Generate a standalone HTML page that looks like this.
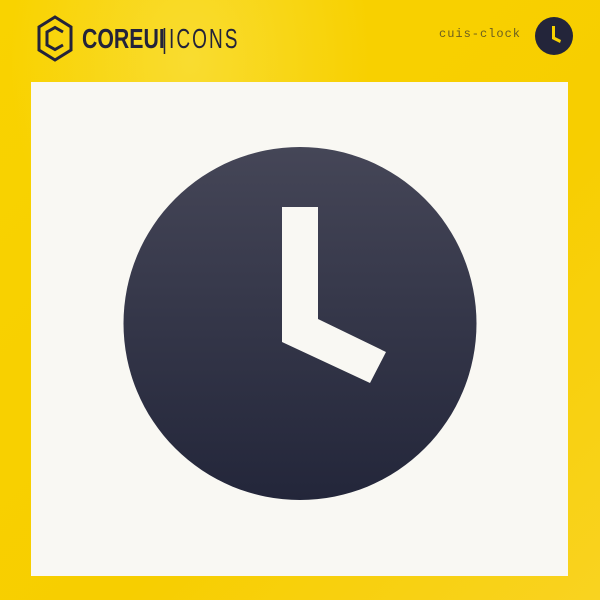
<!DOCTYPE html>
<html><head><style>
html,body{margin:0;padding:0;width:600px;height:600px;overflow:hidden;background:#f8d200;font-family:"Liberation Sans",sans-serif}
.bg{position:absolute;inset:0;background:radial-gradient(ellipse 180px 260px at 190px 60px,#f9dc30 0%,rgba(249,220,48,0) 100%),linear-gradient(135deg,#f9d300,#f7ce00 60%,#f9d320)}
.card{position:absolute;left:31px;top:82px;width:537px;height:494px;background:#f9f8f3}
</style></head><body>
<div class="bg"></div>
<svg style="position:absolute;left:36px;top:15px" width="38" height="48" viewBox="0 0 38 48">
<polygon points="19,2 35,12 35,35 19,45 3,35 3,12" fill="none" stroke="#23233a" stroke-width="3"/>
<path d="M27,17 L19,12.5 L11,17 L11,30 L19,34.5 L27,30" fill="none" stroke="#23233a" stroke-width="3"/>
</svg>
<div style="position:absolute;left:82px;top:24px;font-size:28px;font-weight:bold;color:#23233a;line-height:30px;transform:scaleX(0.76);transform-origin:left">COREUI</div>
<div style="position:absolute;left:162px;top:24px;font-size:28px;color:#23233a;letter-spacing:3px;line-height:30px;transform:scaleX(0.68);transform-origin:left">|ICONS</div>
<div style="position:absolute;left:439px;top:27px;font-family:'Liberation Mono',monospace;font-size:12px;color:#6b5e20;letter-spacing:1px">cuis-clock</div>
<svg style="position:absolute;left:535px;top:17px" width="38" height="38" viewBox="0 0 38 38">
<circle cx="19" cy="19" r="19" fill="#23253a"/>
<polygon points="17,9 20,9 20,20 26,23 25,26 17,22" fill="#f8d200"/>
</svg>
<div class="card"></div>
<svg style="position:absolute;left:0;top:0" width="600" height="600">
<defs><linearGradient id="g" x1="0" y1="0" x2="0" y2="1"><stop offset="0" stop-color="#454657"/><stop offset="1" stop-color="#23263a"/></linearGradient></defs>
<circle cx="300" cy="323.5" r="176.5" fill="url(#g)"/>
<polygon points="282,207 318,207 318,319 386,352 370,383 282,342" fill="#f9f8f3"/>
</svg>
</body></html>
